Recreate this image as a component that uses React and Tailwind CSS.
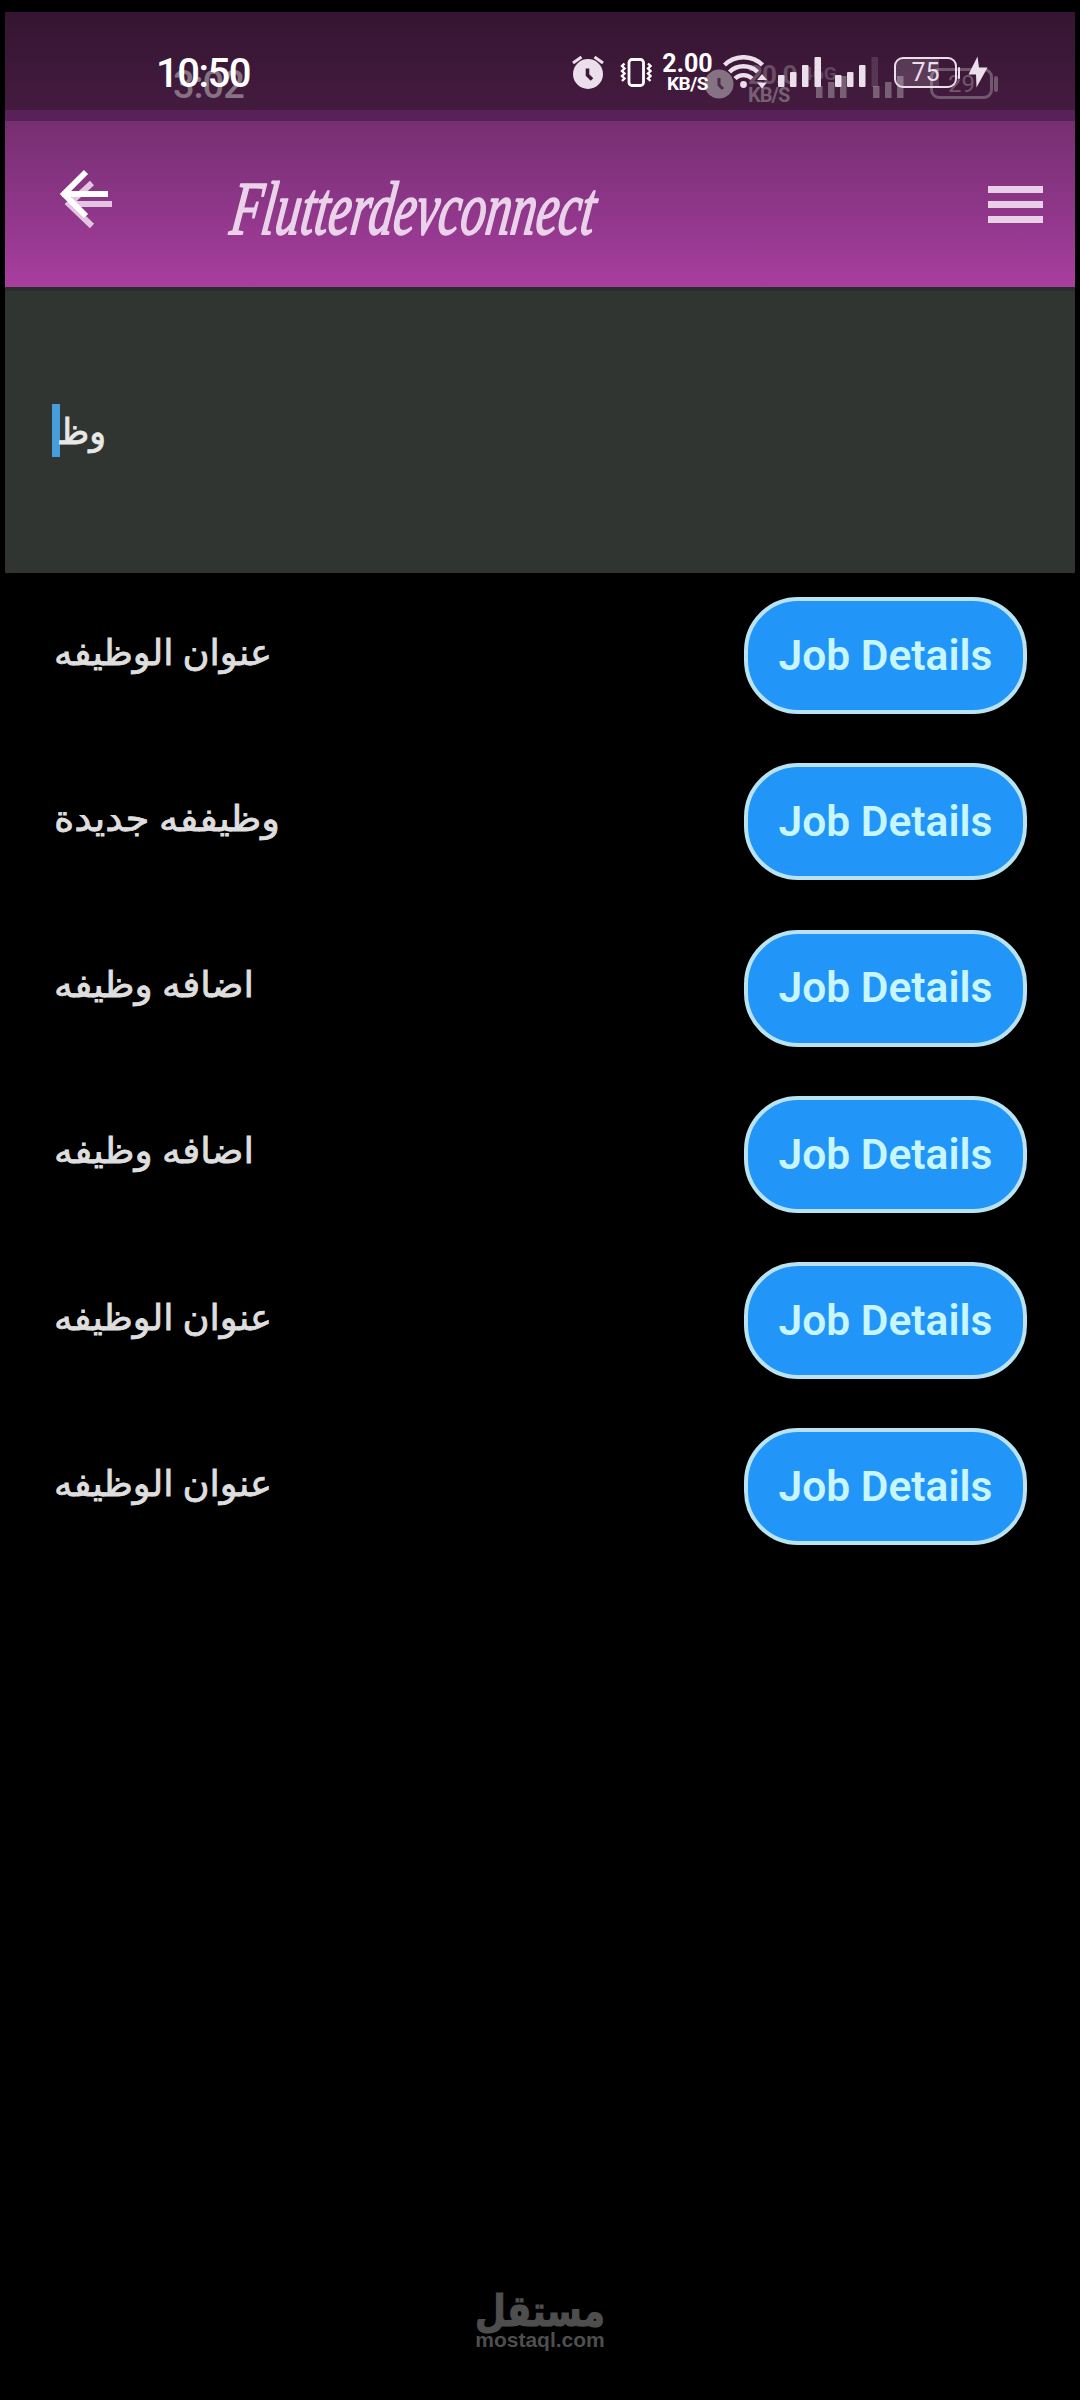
import React from 'react';

const jobs = [
    { id: 1, title: 'عنوان الوظيفه', width: 218 },
    { id: 2, title: 'وظيففه جديدة', width: 226 },
    { id: 3, title: 'اضافه وظيفه', width: 200 },
    { id: 4, title: 'اضافه وظيفه', width: 200 },
    { id: 5, title: 'عنوان الوظيفه', width: 218 },
    { id: 6, title: 'عنوان الوظيفه', width: 218 },
];

// Arabic label stretched to a known width
const ArabicText = ({ text, width, size = 36, stroke = 0.8, className = '' }) => (
    <svg width={width} height="60" className={`block overflow-visible ${className}`}>
        <text
            x={width / 2}
            y="39"
            textAnchor="middle"
            textLength={width}
            lengthAdjust="spacingAndGlyphs"
            direction="rtl"
            fontSize={size}
            fill="currentColor"
            stroke="currentColor"
            strokeWidth={stroke}
        >
            {text}
        </text>
    </svg>
);

const AlarmIcon = () => (
    <svg width="32" height="36" viewBox="0 0 32 36" fill="none">
        <circle cx="16" cy="19" r="15" fill="currentColor" />
        <path d="M1 8L9.500 2M31 8L22.500 2" stroke="currentColor" strokeWidth="3" />
        <path d="M15.500 13.500V20L20 24.500" stroke="#3d1838" strokeWidth="3.600" />
    </svg>
);

const VibrateIcon = () => (
    <svg width="32" height="36" viewBox="0 0 32 36" fill="none" stroke="#fff">
        <rect x="9" y="4.500" width="14.500" height="26" rx="3" strokeWidth="2.800" />
        <path d="M4.500 8.500L2 11L4.500 13.500L2 16L4.500 18.500L2 21L4.500 23.500L2 26" strokeWidth="2.400" />
        <path d="M28 8.500L30.500 11L28 13.500L30.500 16L28 18.500L30.500 21L28 23.500L30.500 26" strokeWidth="2.400" />
    </svg>
);

const WifiIcon = () => (
    <svg width="44" height="36" viewBox="0 0 44 36" fill="none">
        <path d="M1.500 10A27 27 0 0 1 39.500 10" stroke="currentColor" strokeWidth="4.400" />
        <path d="M6.500 17A20 20 0 0 1 34.500 17" stroke="currentColor" strokeWidth="4.400" />
        <path d="M12 23.500A12.500 12.500 0 0 1 29 23.500" stroke="currentColor" strokeWidth="4.400" />
        <circle cx="20.500" cy="29.500" r="3.400" fill="currentColor" />
        <path d="M34 25L39 19L44 25ZM34 27.500L39 33.500L44 27.500Z" fill="currentColor" />
    </svg>
);

const SignalIcon = ({ weak }) => (
    <svg width="43" height="36" viewBox="0 0 43 36" fill="currentColor">
        <rect x="0" y="20" width="6.500" height="12" rx="1" />
        <rect x="12" y="17" width="6.500" height="15" rx="1" />
        <rect x="24" y="10" width="6.500" height="22" rx="1" />
        <rect x="36.500" y="2" width="6.500" height="30" rx="1" opacity={weak ? 0.15 : 1} />
    </svg>
);

const Battery = () => (
    <div className="flex items-center">
        <div className="relative flex h-[31px] w-[63px] items-center justify-center overflow-hidden rounded-[9px] border-2 border-[#eadfea]">
            <div className="absolute left-0 top-0 h-full w-[43px] bg-white/15" />
            <span className="relative text-[25px] leading-none text-[#eadfea]">75</span>
        </div>
        <div className="ml-px h-[12px] w-[2px] rounded-sm bg-[#eadfea]" />
    </div>
);

const BoltIcon = () => (
    <svg width="20" height="36" viewBox="0 0 20 36" fill="currentColor">
        <path d="M9.500 1.500L0.500 19.500H8L8.500 32.500L19.500 12.500H11L9.500 1.500Z" />
    </svg>
);

const AlarmCircle = () => (
    <svg width="30" height="36" viewBox="0 0 30 36" fill="none">
        <circle cx="15" cy="19" r="14.500" fill="currentColor" />
        <path d="M15 13V20L19 24" stroke="#4b2b48" strokeWidth="3" />
    </svg>
);

// Faded status row that shows through behind the current one
const FadedStatus = () => (
    <div className="absolute inset-0 text-[#857282]">
        <span className="absolute left-[168px] top-[54px] text-[38px] font-medium leading-none tracking-[-1px]">3:02</span>
        <div className="absolute left-[699px] top-[53px]">
            <AlarmCircle />
        </div>
        <span className="absolute left-[743px] top-[50px] text-[26px] font-bold leading-none tracking-[-1px] opacity-60">20.0</span>
        <span className="absolute left-[743px] top-[73px] text-[20px] font-bold leading-none tracking-[-1px] opacity-80">KB/S</span>
        <span className="absolute left-[797px] top-[52px] text-[19px] font-bold leading-none opacity-50">46G</span>
        <svg className="absolute left-[811px] top-[61px] opacity-80" width="90" height="26" fill="currentColor">
            <rect x="0" y="13" width="6.500" height="12" />
            <rect x="12" y="9" width="6.500" height="16" />
            <rect x="24" y="3" width="6.500" height="22" />
            <rect x="57" y="13" width="6.500" height="12" />
            <rect x="69" y="9" width="6.500" height="16" />
            <rect x="81" y="3" width="6.500" height="22" />
        </svg>
        <div className="absolute left-[925px] top-[56px] flex items-center opacity-70">
            <div className="flex h-[31px] w-[63px] items-center justify-center rounded-[9px] border-[3px] border-current text-[24px] leading-none">
                29
            </div>
            <div className="ml-px h-[16px] w-1 rounded-sm bg-current" />
        </div>
    </div>
);

const StatusBar = () => (
    <div className="relative h-[98px] bg-linear-to-b from-[#351531] to-[#441b3f]">
        <FadedStatus />
        <div className="relative flex items-start pl-[151px] pr-[87px] pt-[43px] text-[#eadfea]">
            <span className="-mt-px text-[40px] font-medium leading-none tracking-[-1.5px] text-white">10:50</span>
            <div className="ml-auto flex items-start">
                <AlarmIcon />
                <div className="ml-4"><VibrateIcon /></div>
                <div className="ml-[9px] flex w-[53px] flex-col items-center whitespace-nowrap font-bold text-white">
                    <span className="-mt-[2px] text-[25px] leading-[22px]">2.00</span>
                    <span className="text-[19px] leading-[17px] tracking-[-0.5px]">KB/S</span>
                </div>
                <div className="ml-[9px]"><WifiIcon /></div>
                <div className="ml-[11px]"><SignalIcon /></div>
                <div className="ml-[14px]"><SignalIcon weak /></div>
                <div className="ml-4 mt-[2px]"><Battery /></div>
                <div className="ml-2"><BoltIcon /></div>
            </div>
        </div>
    </div>
);

const Header = () => (
    <>
        <div className="h-[11px] bg-[#58215a]" />
        <header className="flex h-[166px] items-start bg-linear-to-b from-[#762f70] via-[#8d3688] to-[#a93e9f] pl-[53px] pr-[32px]">
            <svg width="56" height="66" viewBox="0 0 56 66" fill="none" className="mt-[45px]">
                <path d="M34 17L11 38L34 60M10 38H54" stroke="#e3c5e2" strokeWidth="6" />
                <path d="M28 6L6 28L28 50M4 28H50" stroke="#fff" strokeWidth="6" />
            </svg>
            <svg width="374" height="80" className="ml-[115px] mt-[46px] overflow-visible">
                <text
                    x="9"
                    y="67"
                    textLength="364"
                    lengthAdjust="spacingAndGlyphs"
                    fill="#ead3ea"
                    stroke="#ead3ea"
                    strokeWidth="1.8"
                    strokeLinejoin="round"
                    transform="skewX(-8)"
                    className="font-['Liberation_Serif',serif] text-[76px] italic"
                >
                    Flutterdevconnect
                </text>
            </svg>
            <div className="ml-auto mt-[65px] flex w-[55px] flex-col gap-2">
                <div className="h-[7px] bg-[#e9d0e8]" />
                <div className="h-[7px] bg-[#e9d0e8]" />
                <div className="h-[7px] bg-[#e9d0e8]" />
            </div>
        </header>
    </>
);

const SearchBox = () => (
    <div className="flex h-[286px] items-start border-t-4 border-[#2a2d2e] bg-[#313532] pl-[47px] pt-[113px]">
        <div className="h-[53px] w-2 bg-[#459edb]" />
        <ArabicText text="وظ" width={49} className="-ml-[3px] mt-px text-[#e8e8e8]" />
    </div>
);

const JobRow = ({ job }) => (
    <div className="flex h-[117px] items-center justify-between">
        <ArabicText text={job.title} width={job.width} className="text-[#dedede]" />
        <button className="h-[117px] w-[283px] rounded-[54px] border-4 border-[#b9e3f3] bg-[#2196f8] text-[42.5px] font-semibold text-[#c8f6ff]">
            Job Details
        </button>
    </div>
);

const App = () => {
    return (
        <div className="flex h-[2400px] w-[1080px] flex-col bg-black px-[5px] pt-3 font-[Roboto,'DejaVu_Sans',sans-serif]">
            <StatusBar />
            <Header />
            <SearchBox />
            <main className="flex flex-col gap-[49.3px] pl-[49px] pr-[48px] pt-6">
                {jobs.map((job) => (
                    <JobRow key={job.id} job={job} />
                ))}
            </main>
            <footer className="mb-[48px] mt-auto flex flex-col items-center text-[#4e4e4e]">
                <ArabicText text="مستقل" width={130} size={43} stroke={1.2} className="font-bold" />
                <span className="-mt-[19px] font-['Liberation_Sans',sans-serif] text-[21px] font-bold leading-[24px]">mostaql.com</span>
            </footer>
        </div>
    );
};

export default App;
